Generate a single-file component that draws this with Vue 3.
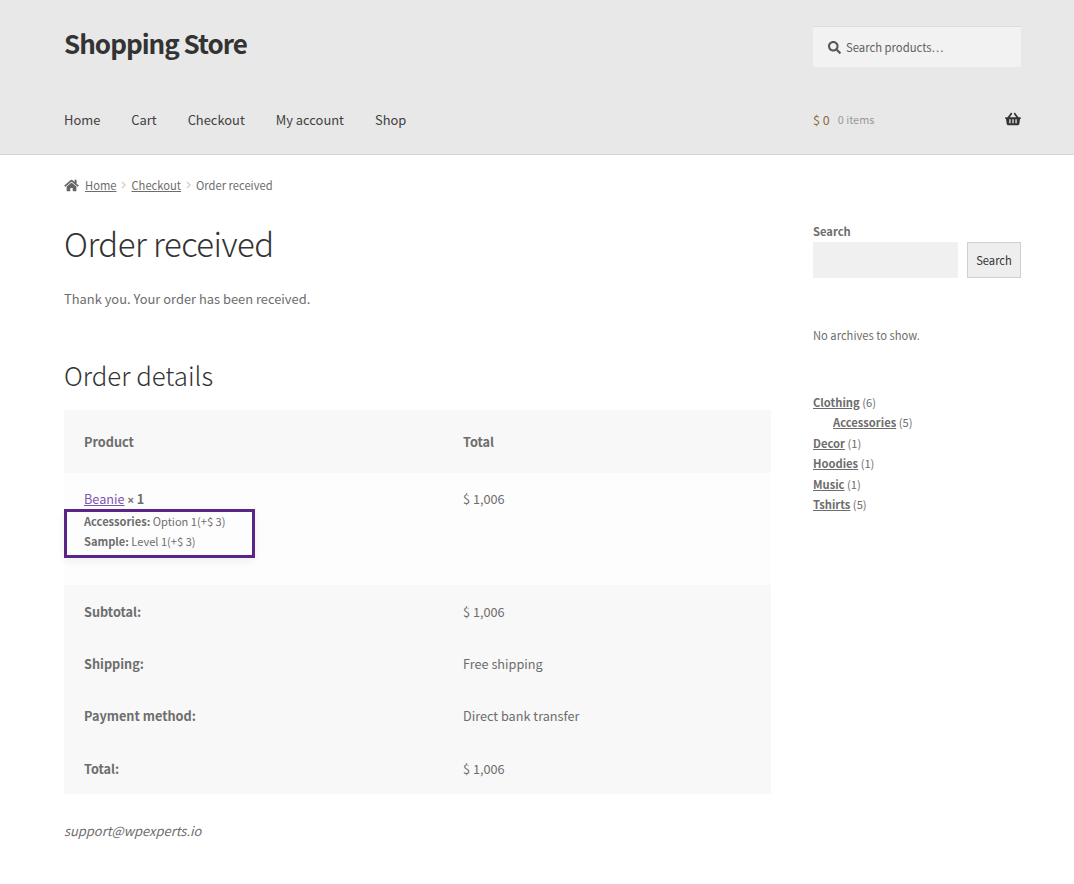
<script setup>
const nav = ['Home', 'Cart', 'Checkout', 'My account', 'Shop'];
const totals = [
  { label: 'Subtotal:', value: '$ 1,006' },
  { label: 'Shipping:', value: 'Free shipping' },
  { label: 'Payment method:', value: 'Direct bank transfer' },
  { label: 'Total:', value: '$ 1,006' },
];
const categories = [
  { name: 'Clothing', count: 6 },
  { name: 'Accessories', count: 5, child: true },
  { name: 'Decor', count: 1 },
  { name: 'Hoodies', count: 1 },
  { name: 'Music', count: 1 },
  { name: 'Tshirts', count: 5 },
];
</script>

<template>
  <div class="page">
    <header class="site-header">
      <div class="head-row">
        <div class="site-title">Shopping Store</div>
        <div class="product-search">
          <svg class="search-icon" viewBox="0 0 512 512"><path d="M505 442.700L405.300 343c-4.500-4.500-10.600-7-17-7H372c27.600-35.300 44-79.700 44-128C416 93.100 322.900 0 208 0S0 93.100 0 208s93.100 208 208 208c48.300 0 92.700-16.400 128-44v16.300c0 6.400 2.500 12.500 7 17l99.700 99.700c9.400 9.400 24.600 9.400 33.900 0l28.300-28.300c9.400-9.400 9.400-24.600.1-34zM208 336c-70.700 0-128-57.200-128-128 0-70.700 57.200-128 128-128 70.700 0 128 57.200 128 128 0 70.700-57.200 128-128 128z"/></svg>
          <span>Search products…</span>
        </div>
      </div>
      <div class="nav-row">
        <nav class="main-nav">
          <a v-for="item in nav" :key="item">{{ item }}</a>
        </nav>
        <div class="cart">
          <span class="amount">$ 0</span>
          <span class="count">0 items</span>
          <svg class="basket" viewBox="0 0 576 512"><path d="M576 216v16c0 13.300-10.700 24-24 24h-8l-26.100 182.800C514.500 462.400 494.200 480 470.300 480H105.700c-23.900 0-44.200-17.600-47.500-41.200L32 256h-8c-13.300 0-24-10.700-24-24v-16c0-13.300 10.700-24 24-24h67.300l106.800-146.800c10.400-14.300 30.400-17.500 44.700-7.100 14.300 10.400 17.500 30.400 7.100 44.700L170.400 192h235.200L326.100 82.800c-10.400-14.300-7.200-34.300 7.100-44.700 14.300-10.400 34.300-7.200 44.700 7.100L484.700 192H552c13.300 0 24 10.700 24 24zM312 392V280c0-13.300-10.700-24-24-24s-24 10.700-24 24v112c0 13.300 10.700 24 24 24s24-10.700 24-24zm112 0V280c0-13.300-10.700-24-24-24s-24 10.700-24 24v112c0 13.300 10.700 24 24 24s24-10.700 24-24zm-224 0V280c0-13.300-10.700-24-24-24s-24 10.700-24 24v112c0 13.300 10.700 24 24 24s24-10.700 24-24z"/></svg>
        </div>
      </div>
    </header>

    <div class="content">
      <div class="breadcrumb">
        <svg class="home-icon" viewBox="0 0 576 512"><path d="M280.400 148.300L96 300.100V464a16 16 0 0 0 16 16l112.100-.3a16 16 0 0 0 15.900-16V368a16 16 0 0 1 16-16h64a16 16 0 0 1 16 16v95.600a16 16 0 0 0 16 16.100L464 480a16 16 0 0 0 16-16V300L295.700 148.300a12.200 12.200 0 0 0-15.300 0zM571.600 251.500L488 182.600V44.100a12 12 0 0 0-12-12h-56a12 12 0 0 0-12 12v72.600L318.500 43a48 48 0 0 0-61 0L4.300 251.500a12 12 0 0 0-1.600 16.900l25.500 31A12 12 0 0 0 45.200 301l235.200-193.700a12.200 12.200 0 0 1 15.300 0L530.900 301a12 12 0 0 0 16.900-1.600l25.500-31a12 12 0 0 0-1.700-16.900z"/></svg>
        <a>Home</a>
        <svg class="chev" viewBox="0 0 6 10"><path d="M1 1l4 4-4 4" /></svg>
        <a>Checkout</a>
        <svg class="chev" viewBox="0 0 6 10"><path d="M1 1l4 4-4 4" /></svg>
        <span>Order received</span>
      </div>

      <div class="columns">
        <main class="main">
          <h1>Order received</h1>
          <p class="thanks">Thank you. Your order has been received.</p>
          <h2>Order details</h2>

          <div class="order-table">
            <div class="row head">
              <div class="cell-a"><strong>Product</strong></div>
              <div class="cell-b"><strong>Total</strong></div>
            </div>
            <div class="row item">
              <div class="cell-a">
                <div class="item-name"><a>Beanie</a> <strong><span class="times">×</span> 1</strong></div>
                <div class="meta"><strong>Accessories:</strong> Option 1(+$ 3)</div>
                <div class="meta"><strong>Sample:</strong> Level 1(+$ 3)</div>
              </div>
              <div class="cell-b">$ 1,006</div>
              <div class="highlight"></div>
            </div>
            <div class="foot">
              <div v-for="t in totals" :key="t.label" class="row foot-row">
                <div class="cell-a"><strong>{{ t.label }}</strong></div>
                <div class="cell-b">{{ t.value }}</div>
              </div>
            </div>
          </div>

          <p class="email">support@wpexperts.io</p>
        </main>

        <aside class="sidebar">
          <div class="widget-search">
            <label>Search</label>
            <div class="search-line">
              <div class="search-input"></div>
              <button>Search</button>
            </div>
          </div>
          <p class="archives">No archives to show.</p>
          <ul class="cats">
            <li v-for="c in categories" :key="c.name" :class="{ child: c.child }">
              <a>{{ c.name }}</a> ({{ c.count }})
            </li>
          </ul>
        </aside>
      </div>
    </div>
  </div>
</template>

<style scoped>
.page {
  height: 884px;
  overflow: hidden;
  background: #fff;
  color: #6d6d6d;
  font-family: "Noto Sans CJK SC", "Open Sans", sans-serif;
  font-size: 13px;
}
.site-header {
  height: 154px;
  padding: 0 53px 0 64px;
  background: #e8e8e8;
  border-bottom: 1px solid #d4d4d4;
}
.head-row {
  display: flex;
  justify-content: space-between;
  height: 96px;
  padding-top: 26px;
  box-sizing: border-box;
}
.site-title {
  margin-top: -1px;
  font-size: 26px;
  line-height: 35px;
  font-weight: 700;
  letter-spacing: -1px;
  color: #333;
}
.product-search {
  display: flex;
  align-items: center;
  width: 208px;
  height: 41px;
  padding-left: 15px;
  box-sizing: border-box;
  background: #f2f2f2;
  border-top: 1px solid #dcdcdc;
  font-size: 11.300px;
  color: #5f5f5f;
}
.search-icon {
  width: 13px;
  height: 13px;
  margin-right: 5px;
  fill: #555;
}
.nav-row {
  display: flex;
  justify-content: space-between;
  align-items: center;
  height: 46px;
}
.main-nav {
  display: flex;
  gap: 31px;
  font-size: 12.900px;
  color: #404040;
}
.cart {
  display: flex;
  align-items: center;
  width: 208px;
  font-size: 12.500px;
}
.amount {
  color: #8a6a3a;
}
.count {
  margin-left: 8px;
  font-size: 10.900px;
  color: #999;
}
.basket {
  width: 16px;
  height: 14px;
  margin-left: auto;
  fill: #333;
}
.content {
  padding: 0 53px 0 64px;
}
.breadcrumb {
  display: flex;
  align-items: center;
  height: 20px;
  margin-top: 20px;
  font-size: 11.200px;
  color: #6d6d6d;
}
.breadcrumb a {
  text-decoration: underline;
}
.home-icon {
  width: 15px;
  height: 13px;
  margin-right: 6px;
  fill: #666;
}
.chev {
  width: 5px;
  height: 8px;
  margin: 0 5px;
  fill: none;
  stroke: #ccc;
  stroke-width: 1.500;
}
.columns {
  display: flex;
  justify-content: space-between;
}
.main {
  width: 707px;
}
h1 {
  margin: 27px 0 0;
  font-size: 32.900px;
  line-height: 42px;
  font-weight: 300;
  letter-spacing: -0.5px;
  color: #333;
}
.thanks {
  margin: 24px 0 0;
  font-size: 12.900px;
  line-height: 22px;
}
h2 {
  margin: 47px 0 0;
  font-size: 25.800px;
  line-height: 36px;
  font-weight: 300;
  color: #333;
}
.order-table {
  margin-top: 17px;
  font-size: 12.700px;
}
.row {
  display: flex;
  position: relative;
}
.cell-a {
  width: 399px;
  padding-left: 20px;
  box-sizing: border-box;
}
.cell-b {
  flex: 1;
}
.head {
  align-items: center;
  height: 63px;
  background: #f8f8f8;
}
.item {
  height: 112px;
  padding-top: 15px;
  box-sizing: border-box;
  background: #fdfdfd;
  line-height: 22px;
}
.item-name a {
  color: #7f54b3;
  text-decoration: underline;
}
.times {
  font-family: "Liberation Sans", sans-serif;
  font-size: 11px;
}
.meta {
  font-size: 11.100px;
  line-height: 20px;
}
.meta:first-of-type {
  margin-top: 1px;
}
.highlight {
  position: absolute;
  left: 0;
  top: 36px;
  width: 191px;
  height: 49px;
  box-sizing: border-box;
  border: 3px solid #5b2587;
  box-shadow: 0 3px 8px rgba(0, 0, 0, 0.06);
}
.foot {
  background: #f8f8f8;
}
.foot-row {
  align-items: center;
  height: 52.300px;
}
.email {
  margin: 26px 0 0;
  font-size: 12.900px;
  line-height: 22px;
  font-style: italic;
}
.sidebar {
  width: 208px;
  margin-top: 27px;
  font-size: 11.200px;
}
.widget-search label {
  display: block;
  font-weight: 600;
  line-height: 18px;
}
.search-line {
  display: flex;
  justify-content: space-between;
  margin-top: 2px;
}
.search-input {
  width: 145px;
  height: 36px;
  background: #f0f0f0;
}
button {
  width: 54px;
  height: 36px;
  padding: 0;
  background: #eeeeee;
  border: 1px solid #cfcfcf;
  font-family: inherit;
  font-size: 11.200px;
  color: #333;
}
.archives {
  margin: 48px 0 0;
  line-height: 18px;
}
.cats {
  list-style: none;
  margin: 48px 0 0;
  padding: 0;
}
.cats li {
  line-height: 20.400px;
}
.cats a {
  font-weight: 600;
  text-decoration: underline;
}
.cats .child {
  padding-left: 20px;
}
</style>

<style>
body {
  background: #fff;
}
</style>
